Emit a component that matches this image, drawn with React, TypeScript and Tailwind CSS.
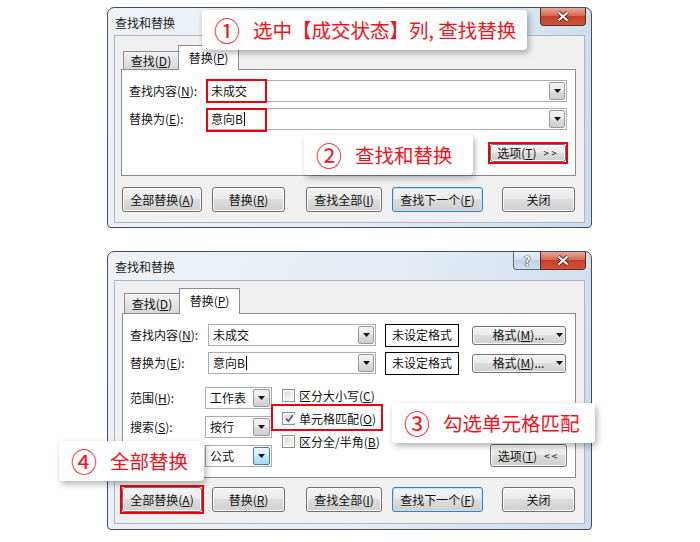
import React from 'react';

type Kids = { children?: React.ReactNode };

const btnFace = 'bg-[linear-gradient(#f3f3f3,#ebebeb_45%,#dddddd_50%,#cfcfcf)]';

function Arrow() {
  return (
    <svg width="7" height="4" viewBox="0 0 7 4">
      <polygon points="0,0 7,0 3.5,4" fill="#111" />
    </svg>
  );
}

function Btn({ className = '', primary = false, children }: Kids & { className?: string; primary?: boolean }) {
  return (
    <div
      className={`flex items-center justify-center rounded-[3px] border text-[12px] leading-none text-[#111] ${btnFace} ${
        primary ? 'border-[#3c7fb1] shadow-[inset_0_0_0_1px_#bfe3f8]' : 'border-[#707070] shadow-[inset_0_0_0_1px_#fbfbfb]'
      } ${className}`}
    >
      {children}
    </div>
  );
}

function RedBox({ className = '' }: { className?: string }) {
  return <span className={`pointer-events-none absolute border-2 border-[#f0000f] ${className}`} />;
}

function Combo({
  className = '',
  btn = 'w-[16px]',
  hover = false,
  children,
}: Kids & { className?: string; btn?: string; hover?: boolean }) {
  return (
    <div className={`relative flex bg-white border border-[#abadb3] ${className}`}>
      <div className="flex-1 flex items-center pl-[4px] text-[12px] leading-none text-[#111]">{children}</div>
      <div
        className={`m-px flex items-center justify-center rounded-[2px] border ${btn} ${
          hover
            ? 'border-[#3c7fb1] bg-[linear-gradient(#eaf6fd,#d9f0fc_50%,#bee6fd_50%,#a7d9f5)]'
            : 'border-[#9a9a9a] bg-[linear-gradient(#f3f3f3,#ebebeb_50%,#dddddd_50%,#cfcfcf)]'
        }`}
      >
        <Arrow />
      </div>
    </div>
  );
}

function Check({ checked = false }: { checked?: boolean }) {
  return (
    <span className="flex w-[13px] h-[13px] border border-[#8e8f8f] bg-white p-px">
      <span className="flex flex-1 items-center justify-center border border-[#f2f2f2] bg-[linear-gradient(135deg,#d9d9d9,#fafafa)]">
        {checked && (
          <svg width="9" height="9" viewBox="0 0 9 9">
            <path d="M1.2 4.6 L3.4 7.2 L7.8 1.2" fill="none" stroke="#45598a" strokeWidth="1.6" />
          </svg>
        )}
      </span>
    </span>
  );
}

function CloseX() {
  return (
    <svg width="14" height="11" viewBox="0 0 14 11">
      <path d="M2.5 1.5 L11.5 9.5 M11.5 1.5 L2.5 9.5" stroke="#5a2418" strokeWidth="4" />
      <path d="M2.5 1.5 L11.5 9.5 M11.5 1.5 L2.5 9.5" stroke="#ffffff" strokeWidth="2.2" />
    </svg>
  );
}

function TitleBar({ help = false, h }: { help?: boolean; h: string }) {
  return (
    <div className={`flex items-start justify-between pl-[7px] pr-[5px] ${h}`}>
      <span className="self-center text-[12px] leading-none text-[#1a1a1a] pt-[2px]">查找和替换</span>
      <div className="flex">
        {help && (
          <div className="flex w-[27px] h-[18px] items-center justify-center rounded-bl-[4px] border border-t-0 border-r-0 border-[#5d6b7c] bg-[linear-gradient(#e9f0f8,#d4e0ee_50%,#c2d3e8_50%,#cfdcec)] text-[13px] font-bold leading-none text-white [text-shadow:0_0_1px_#333,0_0_1px_#333,0_0_1px_#333]">
            ?
          </div>
        )}
        <div
          className={`flex w-[46px] h-[18px] items-center justify-center rounded-br-[4px] border border-t-0 border-[#5a2a22] bg-[linear-gradient(#e9a99a,#d9694f_45%,#c7402a_50%,#d0553a)] ${
            help ? '' : 'rounded-bl-[4px]'
          }`}
        >
          <CloseX />
        </div>
      </div>
    </div>
  );
}

function Tabs({ inactiveH, activeH, stripH }: { inactiveH: string; activeH: string; stripH: string }) {
  return (
    <div className={`flex items-end pl-[2px] ${stripH}`}>
      <div
        className={`flex w-[55px] items-center justify-center border border-r-0 border-b-0 border-[#898c95] bg-[linear-gradient(#f4f4f4,#e4e4e4_50%,#d7d7d7)] text-[12px] leading-none text-[#111] ${inactiveH}`}
      >
        查找(<u>D</u>)
      </div>
      <div
        className={`relative z-10 -mb-px flex w-[61px] justify-center border border-b-0 border-[#898c95] bg-white pt-[6px] text-[12px] leading-none text-[#111] ${activeH}`}
      >
        替换(<u>P</u>)
      </div>
    </div>
  );
}

function Buttons({ first, className = '' }: { first?: React.ReactNode; className?: string }) {
  return (
    <div className={`flex pl-[7px] ${className}`}>
      {first}
      <Btn className="ml-[10px] w-[73px] h-[25px]">
        替换(<u>R</u>)
      </Btn>
      <Btn className="ml-[21px] w-[76px] h-[25px]">
        查找全部(<u>I</u>)
      </Btn>
      <Btn primary className="ml-[10px] w-[91px] h-[25px]">
        查找下一个(<u>F</u>)
      </Btn>
      <Btn className="ml-[19px] w-[73px] h-[25px]">关闭</Btn>
    </div>
  );
}

const frame =
  'w-[485px] rounded-t-[7px] rounded-b-[4px] border border-[#434d59] bg-[linear-gradient(100deg,#eef2f7_0%,#e7edf5_55%,#cbdcee_100%)] flex flex-col';
const client = 'ml-[6px] w-[471px] border border-[#a7b6c8] bg-[#f0f0f0] flex flex-col';

function TopDialog() {
  return (
    <div className={`${frame} h-[221px]`}>
      <TitleBar h="h-[27px]" />
      <div className={`${client} h-[188px] pt-[9px] pl-[6px]`}>
        <Tabs inactiveH="h-[18px]" activeH="h-[25px]" stripH="h-[24px]" />
        <div className="w-[455px] h-[107px] border border-[#898c95] bg-white flex flex-col pt-[10px] pl-[7px]">
          <div className="flex items-center h-[22px]">
            <span className="w-[77px] text-[12px] leading-none text-[#111]">
              查找内容(<u>N</u>):
            </span>
            <Combo className="w-[361px] h-[22px]">
              未成交
              <RedBox className="-left-px -top-[2px] w-[61px] h-[24px]" />
            </Combo>
          </div>
          <div className="flex items-center h-[22px] mt-[6px]">
            <span className="w-[77px] text-[12px] leading-none text-[#111]">
              替换为(<u>E</u>):
            </span>
            <Combo className="w-[361px] h-[22px]">
              意向B<span className="ml-[1px] w-px h-[14px] bg-black" />
              <RedBox className="-left-px -top-[1px] w-[61px] h-[24px]" />
            </Combo>
          </div>
          <div className="flex justify-end pr-[9px] mt-[14px]">
            <div className="relative">
              <Btn className="w-[76px] h-[18px]">
                选项(<u>T</u>)<span className="ml-[7px] tracking-[2px] text-[10px]">&gt;&gt;</span>
              </Btn>
              <RedBox className="-inset-[2px]" />
            </div>
          </div>
        </div>
        <Buttons
          className="mt-[11px] -ml-[6px]"
          first={
            <Btn className="w-[80px] h-[25px]">
              全部替换(<u>A</u>)
            </Btn>
          }
        />
      </div>
    </div>
  );
}

function BottomDialog() {
  return (
    <div className={`${frame} h-[279px]`}>
      <TitleBar help h="h-[28px]" />
      <div className={`${client} h-[244px] pt-[7px] pl-[7px]`}>
        <Tabs inactiveH="h-[20px]" activeH="h-[26px]" stripH="h-[25px]" />
        <div className="w-[454px] h-[165px] border border-[#898c95] bg-white flex flex-col pt-[10px] pl-[7px]">
          <div className="flex items-center h-[22px]">
            <span className="w-[78px] text-[12px] leading-none text-[#111]">
              查找内容(<u>N</u>):
            </span>
            <Combo className="w-[168px] h-[22px]">未成交</Combo>
            <div className="ml-[9px] flex w-[74px] h-[23px] items-center justify-center border border-black bg-white text-[12px] leading-none text-[#111]">
              未设定格式
            </div>
            <Btn className="ml-[13px] w-[94px] h-[19px] pl-[18px]">
              格式(<u>M</u>)...
              <span className="ml-[12px] flex">
                <Arrow />
              </span>
            </Btn>
          </div>
          <div className="flex items-center h-[22px] mt-[6px]">
            <span className="w-[78px] text-[12px] leading-none text-[#111]">
              替换为(<u>E</u>):
            </span>
            <Combo className="w-[168px] h-[22px]">
              意向B<span className="ml-[1px] w-px h-[14px] bg-black" />
            </Combo>
            <div className="ml-[9px] flex w-[74px] h-[23px] items-center justify-center border border-black bg-white text-[12px] leading-none text-[#111]">
              未设定格式
            </div>
            <Btn className="ml-[13px] w-[94px] h-[19px] pl-[18px]">
              格式(<u>M</u>)...
              <span className="ml-[12px] flex">
                <Arrow />
              </span>
            </Btn>
          </div>
          <div className="flex mt-[13px]">
            <div className="flex flex-col gap-[7px]">
              <div className="flex items-center h-[22px]">
                <span className="w-[75px] text-[12px] leading-none text-[#111]">
                  范围(<u>H</u>):
                </span>
                <Combo className="w-[67px] h-[22px]" btn="w-[17px]">
                  工作表
                </Combo>
              </div>
              <div className="flex items-center h-[22px]">
                <span className="w-[75px] text-[12px] leading-none text-[#111]">
                  搜索(<u>S</u>):
                </span>
                <Combo className="w-[67px] h-[22px]" btn="w-[17px]">
                  按行
                </Combo>
              </div>
              <div className="flex items-center h-[22px]">
                {/* label sits under note ④ in the picture */}
                <span className="w-[75px]" />
                <Combo className="w-[67px] h-[22px]" btn="w-[17px]" hover>
                  公式
                </Combo>
              </div>
            </div>
            <div className="ml-[10px] -mt-[3px] flex flex-col text-[12px] leading-none text-[#111]">
              <div className="flex items-center h-[23px]">
                <Check />
                <span className="ml-[4px]">
                  区分大小写(<u>C</u>)
                </span>
              </div>
              <div className="relative flex items-center h-[23px]">
                <Check checked />
                <span className="ml-[4px]">
                  单元格匹配(<u>O</u>)
                </span>
                <RedBox className="-left-[11px] -top-[3px] w-[112px] h-[27px]" />
              </div>
              <div className="flex items-center h-[23px]">
                <Check />
                <span className="ml-[4px]">
                  区分全/半角(<u>B</u>)
                </span>
              </div>
            </div>
            <div className="flex flex-1 items-end justify-end pr-[8px]">
              <Btn className="w-[77px] h-[23px]">
                选项(<u>T</u>)<span className="ml-[7px] tracking-[2px] text-[10px]">&lt;&lt;</span>
              </Btn>
            </div>
          </div>
        </div>
        <Buttons
          className="mt-[9px] -ml-[7px]"
          first={
            <div className="relative">
              <Btn className="w-[80px] h-[25px]">
                全部替换(<u>A</u>)
              </Btn>
              <RedBox className="-inset-[2px]" />
            </div>
          }
        />
      </div>
    </div>
  );
}

function Note({ n, text, className }: { n: string; text: string; className: string }) {
  return (
    <div
      className={`absolute z-20 flex items-center h-[40px] pl-[12px] whitespace-nowrap rounded-[4px] bg-white shadow-[2px_3px_6px_rgba(0,0,0,0.3)] text-[#f5101a] ${className}`}
    >
      <span className="w-[26px] text-[26px] leading-none">{n}</span>
      <span className="ml-[13px] text-[19.5px] leading-none">{text}</span>
    </div>
  );
}

export default function App() {
  return (
    <div className="relative w-[700px] h-[542px] overflow-hidden bg-white font-['Noto_Sans_CJK_SC','Noto_Sans',sans-serif]">
      <div className="flex flex-col gap-[23px] pl-[107px] pt-[7px]">
        <TopDialog />
        <BottomDialog />
      </div>
      <Note n="①" text="选中【成交状态】列, 查找替换" className="left-[202px] top-[10px] w-[325px]" />
      <Note n="②" text="查找和替换" className="left-[304px] top-[135px] w-[169px]" />
      <Note n="③" text="勾选单元格匹配" className="left-[392px] top-[403px] w-[203px]" />
      <Note n="④" text="全部替换" className="left-[59px] top-[441px] w-[145px]" />
    </div>
  );
}
